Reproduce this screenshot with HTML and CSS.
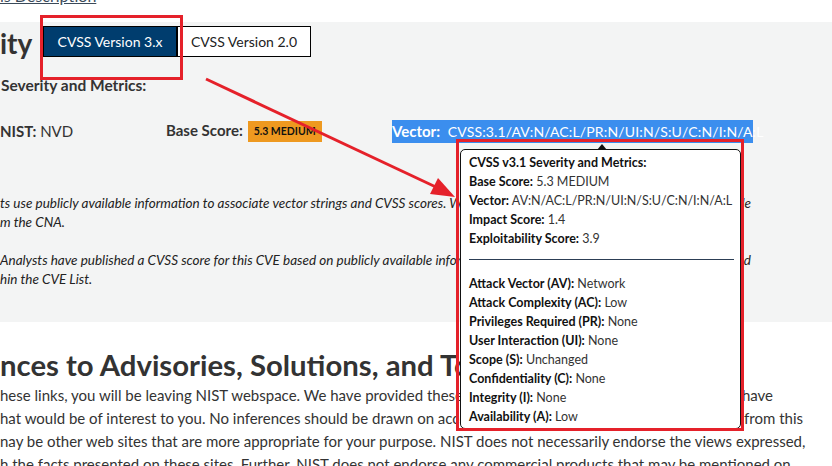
FILE: index.html
```html
<!DOCTYPE html>
<html lang="en">
<head>
<meta charset="utf-8">
<link rel="stylesheet" href="styles.css">
</head>
<body>
<div class="page">
  <div class="top"><a class="desc-link" href="#">is Description</a></div>

  <section class="panel">
    <div class="title-row">
      <h2 class="sev-title">ity</h2>
      <div class="tabs">
        <span class="tab active">CVSS Version 3.x</span>
        <span class="tab">CVSS Version 2.0</span>
      </div>
    </div>
    <h3 class="sub">Severity and Metrics:</h3>
    <div class="metrics">
      <div class="cell"><strong>NIST:</strong> NVD</div>
      <div class="cell"><strong>Base Score:</strong> <span class="badge">5.3 MEDIUM</span></div>
      <div class="cell"><span class="vector"><strong>Vector:</strong>&nbsp; <span class="vec-val">CVSS:3.1/AV:N/AC:L/PR:N/UI:N/S:U/C:N/I:N/A:L</span></span></div>
    </div>
    <div class="notes">
      <div class="line"><span class="l">ts use publicly available information to associate vector strings and CVSS scores. We also display any CVSS information provi</span><span class="r">de</span></div>
      <div class="line"><span class="l">m the CNA.</span></div>
      <div class="gap"></div>
      <div class="line"><span class="l">Analysts have published a CVSS score for this CVE based on publicly available information at the time of analysis. The CNA has not provide</span><span class="r">d</span></div>
      <div class="line"><span class="l">hin the CVE List.</span></div>
    </div>
  </section>

  <section class="refs">
    <h2 class="refs-title">nces to Advisories, Solutions, and Tools</h2>
    <div class="para">
      <div class="pline w1"><span class="l">hese links, you will be leaving NIST webspace. We have provided these links to other web sites because they may</span><span class="r">have</span></div>
      <div class="pline w2"><span class="l">hat would be of interest to you. No inferences should be drawn on account of other sites being referenced, or not,</span><span class="r">from this</span></div>
      <div class="pline">nay be other web sites that are more appropriate for your purpose. NIST does not necessarily endorse the views expressed,</div>
      <div class="pline">h the facts presented on these sites. Further, NIST does not endorse any commercial products that may be mentioned on</div>
    </div>
  </section>

  <div class="tooltip">
    <div class="tip-arrow"></div>
    <div class="tl"><b>CVSS v3.1 Severity and Metrics:</b></div>
    <div class="tl"><b>Base Score:</b> 5.3 MEDIUM</div>
    <div class="tl"><b>Vector:</b> AV:N/AC:L/PR:N/UI:N/S:U/C:N/I:N/A:L</div>
    <div class="tl"><b>Impact Score:</b> 1.4</div>
    <div class="tl"><b>Exploitability Score:</b> 3.9</div>
    <hr class="tip-hr">
    <div class="tl"><b>Attack Vector (AV):</b> Network</div>
    <div class="tl"><b>Attack Complexity (AC):</b> Low</div>
    <div class="tl"><b>Privileges Required (PR):</b> None</div>
    <div class="tl"><b>User Interaction (UI):</b> None</div>
    <div class="tl"><b>Scope (S):</b> Unchanged</div>
    <div class="tl"><b>Confidentiality (C):</b> None</div>
    <div class="tl"><b>Integrity (I):</b> None</div>
    <div class="tl"><b>Availability (A):</b> Low</div>
  </div>

  <div class="mark mark-tabs"></div>
  <div class="mark mark-tip"></div>
  <svg class="arrow" width="832" height="466" viewBox="0 0 832 466">
    <line x1="206" y1="79" x2="438" y2="188" stroke="#e5212a" stroke-width="3"/>
    <polygon points="455,197 430,194 438,178" fill="#e5212a"/>
  </svg>
</div>
</body>
</html>
```
FILE: styles.css
```css
* { box-sizing: border-box; }
html, body { margin: 0; padding: 0; }
body {
  width: 832px;
  height: 466px;
  overflow: hidden;
  background: #fff;
  font-family: "Lato", "Liberation Sans", sans-serif;
  color: #333;
}
.page { position: relative; width: 832px; height: 466px; overflow: hidden; }

.top { height: 22px; overflow: hidden; }
.desc-link {
  display: block;
  margin-top: -14px;
  line-height: 20px;
  font-size: 16px;
  color: #3a4a5a;
  text-decoration: underline;
}

.panel {
  background: #f3f4f4;
  height: 300px;
  padding-top: 4px;
}
.title-row { display: flex; align-items: center; height: 31px; }
.sev-title {
  margin: 0;
  width: 43px;
  font-size: 28px;
  font-weight: 700;
  color: #333;
  line-height: 31px;
  position: relative;
  top: 2px;
}
.tabs { display: flex; }
.tab {
  display: block;
  height: 31px;
  line-height: 29px;
  border: 1px solid #000;
  background: #fff;
  color: #222;
  font-size: 14px;
  width: 134px;
  text-align: center;
}
.tab.active { background: #003d6e; color: #fff; }

.sub {
  margin: 19px 0 0 1px;
  font-size: 15.5px;
  font-weight: 700;
  line-height: 18px;
  color: #333;
}
.metrics {
  display: grid;
  grid-template-columns: 166px 226px auto;
  align-items: center;
  margin-top: 25px;
  height: 24px;
  font-size: 15px;
}
.cell { white-space: nowrap; }
.cell strong { font-weight: 700; }
.badge {
  display: inline-block;
  background: #ee9920;
  color: #111;
  font-weight: 700;
  font-size: 10.5px;
  padding: 0 6px;
  line-height: 21px;
  margin-left: 1px;
  vertical-align: 1px;
}
.vector {
  display: inline-block;
  background: #3b8eee;
  color: #fff;
  line-height: 23px;
  width: 361px;
}
.vec-val { font-size: 14px; letter-spacing: 0.15px; }

.notes {
  margin-top: 51px;
  font-style: italic;
  font-size: 13.5px;
  line-height: 19px;
  color: #222;
}
.line { display: flex; width: 751px; white-space: nowrap; }
.line .l { flex: 1; overflow: hidden; }
.line .r { flex: none; }
.gap { height: 19px; }

.refs { padding-top: 26px; }
.refs-title {
  margin: 0;
  font-size: 29.3px;
  font-weight: 700;
  line-height: 34px;
  color: #333;
  white-space: nowrap;
}
.para {
  margin-top: 2px;
  font-size: 15px;
  line-height: 23px;
  color: #333;
}
.pline { display: flex; white-space: nowrap; }
.pline .l { flex: 1; overflow: hidden; }
.pline .r { flex: none; padding-left: 4px; }
.w1 { width: 773px; }
.w2 { width: 803px; }

.tooltip {
  position: absolute;
  left: 460px;
  top: 149px;
  width: 281px;
  height: 280px;
  background: #fff;
  border: 1px solid #111;
  border-radius: 5px;
  padding: 3px 8px 0 8px;
  font-size: 12.5px;
  line-height: 19px;
  color: #333;
}
.tl { white-space: nowrap; }
.tooltip b { color: #111; font-weight: 700; }
.tip-arrow {
  position: absolute;
  left: 136px;
  top: -6px;
  width: 0; height: 0;
  border-left: 5px solid transparent;
  border-right: 5px solid transparent;
  border-bottom: 6px solid #111;
}
.tip-hr {
  border: 0;
  border-top: 1px solid #2c3e55;
  margin: 11px 0 14px 0;
  width: 265px;
}

.mark {
  position: absolute;
  border: 3px solid #e5212a;
}
.mark-tabs { left: 40px; top: 15px; width: 143px; height: 65px; }
.mark-tip { left: 456px; top: 139px; width: 288px; height: 292px; }
.arrow { position: absolute; left: 0; top: 0; pointer-events: none; }
```
